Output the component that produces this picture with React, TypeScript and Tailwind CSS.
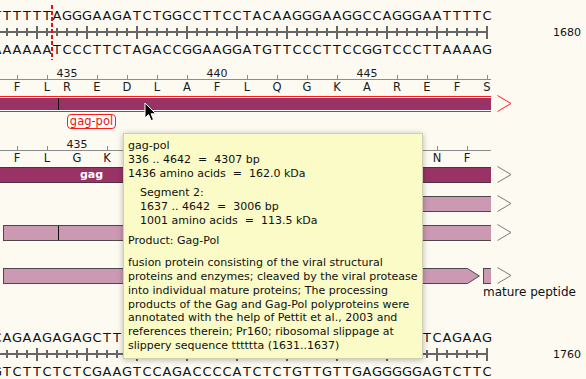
import React from "react";

const TOP1 = "TTTTTTAGGGAAGATCTGGCCTTCCTACAAGGGAAGGCCAGGGAATTTTC";
const TOP2 = "CAGAAGAGAGCTTCAGGTCTGGGGTAGAGACAACAACTCCCCCTCAGAAG";

const PAIR: Record<string, string> = { A: "T", T: "A", G: "C", C: "G" };
const complement = (s: string) =>
  s
    .split("")
    .map((c) => PAIR[c])
    .join("");

// the tooltip covers x 123..423, text under it is not drawn
const covered = (idx: number) => {
  const x = -3 + 10 * idx;
  return x > 118 && x < 422;
};

type Aa = { c: string; idx: number; num?: string };

// gag-pol reads with a -1 shift after the slippery site
const gagPol: Aa[] = "FLREDLAFLQGKAREFS".split("").map((c, k) => ({
  c,
  idx: k === 0 ? 2 : k === 1 ? 5 : 7 + 3 * (k - 2),
  num: k === 2 ? "435" : k === 7 ? "440" : k === 12 ? "445" : undefined,
}));

const gag: Aa[] = "FLGKIWPSYKGRPGNF".split("").map((c, k) => ({
  c: covered(2 + 3 * k) ? "" : c,
  idx: 2 + 3 * k,
  num: k === 2 ? "435" : undefined,
}));

const Strand = ({ seq, hide }: { seq: string; hide?: boolean }) => (
  <div className="-ml-[8px] flex h-[20px] text-[13px] leading-[20px] text-[#111]">
    {seq.split("").map((c, i) => (
      <div key={i} className="flex w-[10px] shrink-0 justify-center">
        {hide && covered(i) ? "" : c}
      </div>
    ))}
  </div>
);

const RulerRow = ({ first, label }: { first: number; label: string }) => (
  <div className="flex h-[12px] items-center">
    <div className="-ml-[8px] flex h-[12px] w-[500px] shrink-0 items-center bg-[linear-gradient(#666,#666)] bg-[length:496px_2px] bg-[position:0_center] bg-no-repeat">
      {Array.from({ length: 50 }).map((_, i) => (
        <div key={i} className="flex w-[10px] shrink-0 justify-center">
          <div
            className={
              (first + i) % 5 === 0
                ? "h-[13px] w-[2px] bg-[#666]"
                : "h-[8px] w-[2px] bg-[#666]"
            }
          />
        </div>
      ))}
    </div>
    <span className="ml-[61px] text-[11px] leading-none text-[#111]">{label}</span>
  </div>
);

const AminoRows = ({ items }: { items: Aa[] }) => {
  const lefts = items.map((a) => -3 + 10 * a.idx - 10);
  const margins = lefts.map((l, i) => (i === 0 ? l : l - (lefts[i - 1] + 20)));
  return (
    <>
      <div className="flex h-[12px] w-[491px] items-end border-b border-[#8c8c8c]">
        {items.map((a, i) =>
          a.num ? (
            <div
              key={i}
              style={{ marginLeft: margins[i] }}
              className="flex w-[20px] shrink-0 justify-center text-[11px] leading-[11px] text-[#1a1a1a]"
            >
              {a.num}
            </div>
          ) : (
            <div key={i} style={{ marginLeft: margins[i] }} className="flex w-[20px] shrink-0">
              <div className="ml-[10px] h-[4px] w-px bg-[#8c8c8c]" />
            </div>
          )
        )}
      </div>
      <div className="flex h-[14px] text-[11.5px] leading-[14px] text-[#1a1a1a]">
        {items.map((a, i) => (
          <div key={i} style={{ marginLeft: margins[i] }} className="flex w-[20px] shrink-0 justify-center">
            {a.c}
          </div>
        ))}
      </div>
    </>
  );
};

const Chevron = ({ color }: { color: string }) => (
  <svg width="15" height="17" viewBox="0 0 15 17" className="ml-[6px] shrink-0">
    <polyline points="0.5,0.5 14,8.5 0.5,16.5" fill="none" stroke={color} strokeWidth="1" />
  </svg>
);

const Cursor = () => (
  <svg width="14" height="21" viewBox="0 0 14 21">
    <path
      d="M1 1 L1 16 L4.6 12.6 L7.1 18.6 L9.5 17.6 L7 11.8 L11.8 11.8 Z"
      fill="#000"
      stroke="#fff"
      strokeWidth="1"
      strokeLinejoin="round"
    />
  </svg>
);

const Tooltip = () => (
  <div className="absolute left-[123px] top-[133px] h-[226px] w-[300px] border border-[#cfcfb4] bg-[#fafbc7] pl-[4px] pt-[5px] text-[11px] leading-[14px] text-[#111] shadow-[0_1px_6px_rgba(0,0,0,0.28)]">
    <div>gag-pol</div>
    <div className="whitespace-pre">336 .. 4642  =  4307 bp</div>
    <div className="whitespace-pre">1436 amino acids  =  162.0 kDa</div>
    <div className="mt-[5px] pl-[12px]">
      <div>Segment 2:</div>
      <div className="whitespace-pre">1637 .. 4642  =  3006 bp</div>
      <div className="whitespace-pre">1001 amino acids  =  113.5 kDa</div>
    </div>
    <div className="mt-[6px]">Product: Gag-Pol</div>
    <div className="mt-[8px] whitespace-nowrap leading-[13.85px]">
      <div>fusion protein consisting of the viral structural</div>
      <div>proteins and enzymes; cleaved by the viral protease</div>
      <div>into individual mature proteins; The processing</div>
      <div>products of the Gag and Gag-Pol polyproteins were</div>
      <div>annotated with the help of Pettit et al., 2003 and</div>
      <div>references therein; Pr160; ribosomal slippage at</div>
      <div>slippery sequence tttttta (1631..1637)</div>
    </div>
  </div>
);

export default function App() {
  return (
    <div className="relative h-[379px] w-[586px] overflow-hidden bg-[#fdfaf2] font-['DejaVu_Sans',sans-serif] text-[#111]">
      {/* first sequence block */}
      <div className="pt-[6px]">
        <Strand seq={TOP1} />
        <RulerRow first={1631} label="1680" />
        <div className="mt-[2px]">
          <Strand seq={complement(TOP1)} />
        </div>
      </div>

      {/* gag-pol translation */}
      <div className="mt-[8px]">
        <AminoRows items={gagPol} />
      </div>
      <div className="mt-[1px] flex items-center">
        <div className="-ml-[2px] flex h-[16px] w-[493px] shrink-0 border-y border-[#ff1a1a]">
          <div className="flex flex-1 border-y border-white">
            <div className="w-[60px] bg-[#993366]" />
            <div className="w-px bg-[#111]" />
            <div className="flex-1 bg-[#993366]" />
          </div>
        </div>
        <Chevron color="#ff2020" />
      </div>
      <div className="ml-[67px] mt-[2px] flex h-[15px] w-[49px] items-center justify-center rounded-[4px] border border-[#ff1a1a] bg-white text-[11.5px] leading-none text-[#f01010]">
        gag-pol
      </div>

      {/* gag translation */}
      <div className="mt-[10px]">
        <AminoRows items={gag} />
      </div>
      <div className="mt-[1px] flex items-center">
        <div className="-ml-[1px] flex h-[16px] w-[492px] shrink-0 items-center border-y border-[#4d3340] bg-[#993366]">
          <span className="ml-[81px] text-[11px] font-bold leading-none text-white">gag</span>
        </div>
        <Chevron color="#7a7a7a" />
      </div>

      {/* mature peptides */}
      <div className="mt-[12px] flex items-center">
        <div className="ml-[200px] h-[16px] w-[291px] shrink-0 border-y border-l border-[#4a4a4a] bg-[#cc99b3]" />
        <Chevron color="#7a7a7a" />
      </div>
      <div className="mt-[12px] flex items-center">
        <div className="ml-[3px] flex h-[16px] w-[488px] shrink-0 border-y border-l border-[#4a4a4a] bg-[#cc99b3]">
          <div className="w-[54px]" />
          <div className="w-px bg-[#111]" />
        </div>
        <Chevron color="#7a7a7a" />
      </div>
      <div className="mt-[26px] flex items-center">
        <div className="ml-[3px] h-[16px] w-[464px] shrink-0 border-y border-l border-[#4a4a4a] bg-[#cc99b3]" />
        <svg width="13" height="16" viewBox="0 0 13 16" className="shrink-0">
          <polygon points="0,0.5 0.5,0.5 12.3,8 0.5,15.5 0,15.5" fill="#cc99b3" />
          <polyline points="0,0.5 0.5,0.5 12.3,8 0.5,15.5 0,15.5" fill="none" stroke="#4a4a4a" strokeWidth="1" />
        </svg>
        <div className="ml-[3px] h-[16px] w-[8px] shrink-0 border-y border-l border-[#4a4a4a] bg-[#cc99b3]" />
        <Chevron color="#7a7a7a" />
      </div>
      <div className="ml-[483px] mt-[1px] h-[14px] whitespace-nowrap text-[12px] leading-[14px] text-[#111]">
        mature peptide
      </div>

      {/* second sequence block */}
      <div className="mt-[29px]">
        <Strand seq={TOP2} hide />
        <RulerRow first={1711} label="1760" />
        <div className="mt-[2px]">
          <Strand seq={complement(TOP2)} />
        </div>
      </div>

      {/* slippage marker */}
      <div className="absolute left-[51px] top-[5px] h-[55px] w-[2px] bg-[repeating-linear-gradient(to_bottom,#e81010_0_4px,transparent_4px_6px)]" />

      <Tooltip />

      <div className="absolute left-[144px] top-[102px]">
        <Cursor />
      </div>
    </div>
  );
}
